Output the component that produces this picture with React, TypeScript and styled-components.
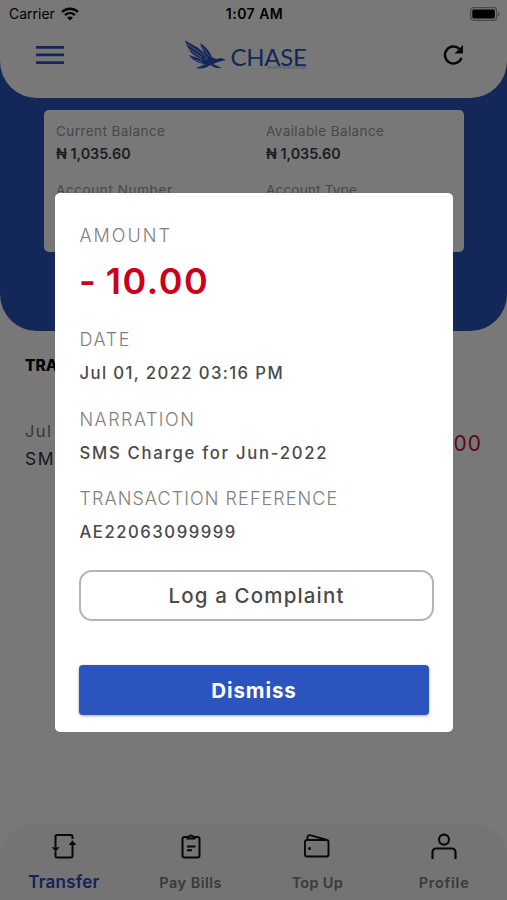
import React from 'react';
import styled, { createGlobalStyle } from 'styled-components';

const GlobalStyle = createGlobalStyle`
  * { box-sizing: border-box; }
  body { margin: 0; background: #fff; font-family: Inter, sans-serif; }
  button { font-family: inherit; margin: 0; padding: 0; cursor: pointer; }
`;

const Screen = styled.div`
  position: relative;
  height: 900px;
  overflow: hidden;
  display: flex;
  flex-direction: column;
  background: #fff;
`;

const Hero = styled.section`
  height: 331px;
  background: #2b54be;
  border-radius: 0 0 37px 37px;
`;

const Header = styled.header`
  height: 98px;
  background: #fff;
  border-radius: 0 0 37px 37px;
`;

const StatusBar = styled.div`
  height: 27px;
  padding: 0 7px 0 9px;
  display: grid;
  grid-template-columns: 1fr auto 1fr;
  align-items: center;
  font-size: 14px;
  line-height: 27px;
  color: #000;
`;

const Carrier = styled.div`
  display: flex;
  align-items: center;
  gap: 6px;
`;

const Clock = styled.div`
  font-weight: 600;
  letter-spacing: 0.48px;
`;

const BatterySlot = styled.div`
  display: flex;
  justify-content: flex-end;
`;

const Toolbar = styled.div`
  height: 56px;
  padding: 0 42px 0 36px;
  display: flex;
  align-items: center;
  justify-content: space-between;
`;

const Brand = styled.div`
  display: flex;
  align-items: center;
  gap: 4px;
  margin-left: -16px;
  color: #2b54be;
`;

const BrandText = styled.div`
  display: flex;
  flex-direction: column;
  align-items: flex-end;
  padding-top: 5px;
`;

const BrandName = styled.div`
  font: 400 24px/24px Lato, sans-serif;
  letter-spacing: -0.3px;
`;

const BrandTag = styled.div`
  margin-top: -3px;
  font-size: 3px;
  line-height: 4px;
  letter-spacing: 0.4px;
  color: #6c9bd2;
`;

const AccountCard = styled.div`
  height: 142px;
  margin: 12px 43px 0 44px;
  padding: 11px 12px;
  display: grid;
  grid-template-columns: 210px 1fr;
  grid-auto-rows: 59px;
  background: #fff;
  border-radius: 5px;
`;

const AccountLabel = styled.div<{ $spacing: number }>`
  font-size: 13.5px;
  line-height: 20px;
  letter-spacing: ${(p) => p.$spacing}px;
  color: #999;
`;

const AccountValue = styled.div`
  margin-top: 3px;
  font-size: 14.3px;
  font-weight: 600;
  line-height: 20px;
  color: #3c4049;
`;

const History = styled.section`
  flex: 1;
  padding: 23px 26px 0 25px;
`;

const HistoryTitle = styled.h2`
  margin: 0;
  font-size: 15.5px;
  font-weight: 800;
  line-height: 24px;
  color: #000;
`;

const Entry = styled.div`
  margin-top: 40px;
  display: flex;
  align-items: center;
  justify-content: space-between;
`;

const EntryDate = styled.div`
  font-size: 16.5px;
  line-height: 27px;
  letter-spacing: 1.4px;
  color: #777;
`;

const EntryTitle = styled(EntryDate)`
  font-size: 17.5px;
  letter-spacing: 1.6px;
  color: #333;
`;

const EntryAmount = styled.div`
  margin: -4px -1px 0 0;
  font-size: 21px;
  letter-spacing: 1px;
  color: #c8102e;
`;

const TabBar = styled.nav`
  height: 76px;
  display: grid;
  grid-template-columns: repeat(4, 1fr);
  background: #f6f6f6;
  border-radius: 34px 34px 0 0;
`;

const Tab = styled.div`
  display: flex;
  flex-direction: column;
  align-items: center;
  padding: 7px 0 0 1px;
  color: #111;
`;

const TabLabel = styled.div<{ $active?: boolean; $spacing: number }>`
  margin-top: ${(p) => (p.$active ? 11 : 12)}px;
  font-size: ${(p) => (p.$active ? 17 : 14.5)}px;
  font-weight: 600;
  line-height: 20px;
  letter-spacing: ${(p) => p.$spacing}px;
  color: ${(p) => (p.$active ? '#2b4cb8' : '#7c7c7c')};
`;

const Overlay = styled.div`
  position: absolute;
  inset: 0;
  padding: 193px 54px 0 55px;
  background: rgba(0, 0, 0, 0.53);
`;

const Dialog = styled.div`
  height: 539px;
  padding: 31px 19px 0 24px;
  display: flex;
  flex-direction: column;
  background: #fff;
  border-radius: 5px;
`;

const Field = styled.div`
  margin-bottom: 22.5px;
`;

const FieldLabel = styled.div<{ $spacing: number }>`
  padding-left: 0.5px;
  font-size: 18px;
  font-weight: 300;
  line-height: 24px;
  letter-spacing: ${(p) => p.$spacing}px;
  color: #808080;
`;

const FieldValue = styled.div<{ $spacing: number }>`
  margin-top: 9px;
  padding-left: 0.5px;
  font-size: 16.7px;
  font-weight: 500;
  line-height: 24px;
  letter-spacing: ${(p) => p.$spacing}px;
  white-space: nowrap;
  color: #4a4a4a;
`;

const Amount = styled.div`
  margin: 11px 0 25px;
  font-size: 36px;
  font-weight: 600;
  line-height: 44px;
  letter-spacing: 1.5px;
  word-spacing: -2px;
  color: #cc0019;
`;

const ComplaintButton = styled.button`
  height: 51px;
  margin-top: 3px;
  border: 2px solid #b4b4b4;
  border-radius: 13px;
  background: #fff;
  font-size: 20.5px;
  font-weight: 500;
  letter-spacing: 1.15px;
  color: #4a4a4a;
`;

const DismissButton = styled.button`
  height: 50px;
  margin: 44.5px 5px 0 0;
  border: 0;
  border-radius: 4px;
  background: #2b54be;
  box-shadow: 0 1px 3px rgba(0, 0, 0, 0.35);
  font-size: 20.5px;
  font-weight: 700;
  letter-spacing: 0.9px;
  color: #fff;
`;

const WifiIcon = () => (
  <svg width="18" height="14" viewBox="0 0 18 14" fill="none" stroke="#000" strokeWidth="2.4">
    <path d="M1 5C5.5.7 12.5.7 17 5M4 8.1c2.9-2.7 7.1-2.7 10 0" />
    <path d="M9 13.4 6 10.5c1.7-1.5 4.3-1.5 6 0z" fill="#000" stroke="none" />
  </svg>
);

const BatteryIcon = () => (
  <svg width="30" height="14" viewBox="0 0 30 14">
    <rect x=".7" y=".7" width="26" height="12.6" rx="3" fill="none" stroke="#999" strokeWidth="1.2" />
    <rect x="2.3" y="2.5" width="22.6" height="9" rx="1.4" />
    <path d="M28 4.7c2 .9 2 3.7 0 4.6z" fill="#999" />
  </svg>
);

const MenuIcon = () => (
  <svg width="28" height="20" viewBox="0 0 28 20" fill="#2b54be">
    <path d="M0 1h28v2.7H0zM0 8.6h28v2.7H0zM0 16.3h28V19H0z" />
  </svg>
);

const RefreshIcon = () => (
  <svg width="22" height="22" viewBox="0 0 22 22" fill="none">
    <path d="M18.5 13.8A8.5 8.5 0 1 1 16.500 5" stroke="#111" strokeWidth="2.4" />
    <path d="M20 1v8.600H11.500z" fill="#111" />
  </svg>
);

const EagleLogo = () => (
  <svg width="42" height="30" viewBox="0 0 42 30" fill="#2b54be">
    <path d="M0 0C6 5 14 6 19 14L22 19 18 20C9 18 3 11 0 0Z" />
    <path d="M15 3C21 7 25 11 27 18L24 20C20 16 17 10 15 3Z" />
    <path d="M4 15 19 20 27 17 31 19 36 18 41 20 37 21 33 22 28 24 37 28 31 28 25 25C20 29 16 29 11 28L19 24C13 23 8 21 4 15Z" />
    <path d="M2 4 18 15M2.500 8 17 17.500M4 12 17 20M9 20l8 2M17 7l7 9M14 27l6-3" stroke="#fff" strokeWidth=".6" fill="none" />
  </svg>
);

const tabIcon = { width: 30, height: 30, viewBox: '0 0 30 30', fill: 'none', stroke: 'currentColor', strokeWidth: 2 } as const;

const TransferIcon = () => (
  <svg {...tabIcon}>
    <path d="M6.500 16V5.500A1.500 1.500 0 0 1 8 4h14a1.500 1.500 0 0 1 1.500 1.500V8M6.500 21v4A1.500 1.500 0 0 0 8 26.500h14a1.500 1.500 0 0 0 1.500-1.500V12" />
    <path d="M2.800 16.300h7.600L6.600 21zM19.700 14h7.600L23.500 9.300z" fill="currentColor" stroke="none" />
  </svg>
);

const BillsIcon = () => (
  <svg {...tabIcon}>
    <path d="M11 6H8.500A2 2 0 0 0 6.500 8v16.500a2 2 0 0 0 2 2h13a2 2 0 0 0 2-2V8a2 2 0 0 0-2-2H19" />
    <path d="M11.500 7.500V6c1.500 0 2-1.500 3.500-1.500S17 6 18.500 6v1.500z" />
    <path d="M11 15.500h8.500M11 19.300h5" />
  </svg>
);

const WalletIcon = () => (
  <svg {...tabIcon} strokeWidth={1.9}>
    <rect x="3" y="9" width="23.500" height="16.500" rx="2" />
    <path d="M5.500 9V6a2 2 0 0 1 2.500-1.800L25 9" />
    <circle cx="7.500" cy="17.500" r="1.500" fill="currentColor" stroke="none" />
  </svg>
);

const ProfileIcon = () => (
  <svg {...tabIcon} strokeWidth={2.1}>
    <circle cx="15" cy="8.600" r="5" />
    <path d="M3.500 28v-7A3.500 3.500 0 0 1 7 17.500h16a3.500 3.500 0 0 1 3.500 3.500v7" />
  </svg>
);

const accountInfo = [
  { label: 'Current Balance', value: '₦ 1,035.60', spacing: 0.43 },
  { label: 'Available Balance', value: '₦ 1,035.60', spacing: 0.39 },
  { label: 'Account Number', value: '', spacing: 0.6 },
  { label: 'Account Type', value: '', spacing: 0.21 },
];

const fields = [
  { label: 'DATE', labelSpacing: 1.6, value: 'Jul 01, 2022 03:16 PM', valueSpacing: 1.38 },
  { label: 'NARRATION', labelSpacing: 1.45, value: 'SMS Charge for Jun-2022', valueSpacing: 1.72 },
  { label: 'TRANSACTION REFERENCE', labelSpacing: 1.07, value: 'AE22063099999', valueSpacing: 1.52 },
];

const tabs = [
  { label: 'Transfer', Icon: TransferIcon, active: true, spacing: 0.25 },
  { label: 'Pay Bills', Icon: BillsIcon, active: false, spacing: 0.5 },
  { label: 'Top Up', Icon: WalletIcon, active: false, spacing: 0.3 },
  { label: 'Profile', Icon: ProfileIcon, active: false, spacing: 0.75 },
];

export default function App() {
  return (
    <>
      <GlobalStyle />
      <Screen>
        <Hero>
          <Header>
            <StatusBar>
              <Carrier>Carrier <WifiIcon /></Carrier>
              <Clock>1:07 AM</Clock>
              <BatterySlot><BatteryIcon /></BatterySlot>
            </StatusBar>
            <Toolbar>
              <MenuIcon />
              <Brand>
                <EagleLogo />
                <BrandText>
                  <BrandName>CHASE</BrandName>
                  <BrandTag>MICROFINANCE BANK</BrandTag>
                </BrandText>
              </Brand>
              <RefreshIcon />
            </Toolbar>
          </Header>
          <AccountCard>
            {accountInfo.map((item) => (
              <div key={item.label}>
                <AccountLabel $spacing={item.spacing}>{item.label}</AccountLabel>
                <AccountValue>{item.value}</AccountValue>
              </div>
            ))}
          </AccountCard>
        </Hero>
        <History>
          <HistoryTitle>TRANSACTIONS</HistoryTitle>
          <Entry>
            <div>
              <EntryDate>Jul 01, 2022</EntryDate>
              <EntryTitle>SMS Charge</EntryTitle>
            </div>
            <EntryAmount>- 10.00</EntryAmount>
          </Entry>
        </History>
        <TabBar>
          {tabs.map(({ label, Icon, active, spacing }) => (
            <Tab key={label}>
              <Icon />
              <TabLabel $active={active} $spacing={spacing}>{label}</TabLabel>
            </Tab>
          ))}
        </TabBar>
        <Overlay>
          <Dialog role="dialog" aria-modal="true">
            <FieldLabel $spacing={2}>AMOUNT</FieldLabel>
            <Amount>- 10.00</Amount>
            {fields.map((field) => (
              <Field key={field.label}>
                <FieldLabel $spacing={field.labelSpacing}>{field.label}</FieldLabel>
                <FieldValue $spacing={field.valueSpacing}>{field.value}</FieldValue>
              </Field>
            ))}
            <ComplaintButton>Log a Complaint</ComplaintButton>
            <DismissButton>Dismiss</DismissButton>
          </Dialog>
        </Overlay>
      </Screen>
    </>
  );
}
